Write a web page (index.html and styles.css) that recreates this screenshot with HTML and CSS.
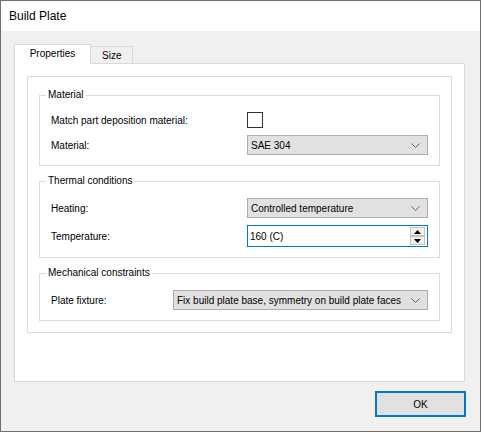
FILE: index.html
```html
<!DOCTYPE html>
<html lang="en">

<head>
  <meta charset="UTF-8">
  <title>Build Plate</title>
  <link rel="stylesheet" href="styles.css">
</head>

<body>
  <div class="window">
    <div class="titlebar">Build Plate</div>
    <div class="client">
      <div class="tabs">
        <div class="tab active">Properties</div>
        <div class="tab">Size</div>
      </div>
      <div class="tabpage">
        <div class="page-inner">
          <fieldset class="group">
            <legend>Material</legend>
            <div class="row">
              <span class="label">Match part deposition material:</span>
              <span class="control"><span class="checkbox"></span></span>
            </div>
            <div class="row">
              <span class="label">Material:</span>
              <div class="combo">
                <span>SAE 304</span>
                <svg class="chevron" width="9" height="5" viewBox="0 0 9 5"><polyline points="0.5,0.5 4.5,4.5 8.5,0.5" /></svg>
              </div>
            </div>
          </fieldset>

          <fieldset class="group">
            <legend>Thermal conditions</legend>
            <div class="row">
              <span class="label">Heating:</span>
              <div class="combo">
                <span>Controlled temperature</span>
                <svg class="chevron" width="9" height="5" viewBox="0 0 9 5"><polyline points="0.5,0.5 4.5,4.5 8.5,0.5" /></svg>
              </div>
            </div>
            <div class="row">
              <span class="label">Temperature:</span>
              <div class="spin">
                <span>160 (C)</span>
                <div class="spin-buttons">
                  <div class="spin-btn"><svg width="7" height="4" viewBox="0 0 7 4"><polygon points="3.5,0 7,4 0,4" /></svg></div>
                  <div class="spin-btn"><svg width="7" height="4" viewBox="0 0 7 4"><polygon points="0,0 7,0 3.5,4" /></svg></div>
                </div>
              </div>
            </div>
          </fieldset>

          <fieldset class="group">
            <legend>Mechanical constraints</legend>
            <div class="row wide">
              <span class="label">Plate fixture:</span>
              <div class="combo">
                <span>Fix build plate base, symmetry on build plate faces</span>
                <svg class="chevron" width="9" height="5" viewBox="0 0 9 5"><polyline points="0.5,0.5 4.5,4.5 8.5,0.5" /></svg>
              </div>
            </div>
          </fieldset>
        </div>
      </div>
      <div class="buttons">
        <button class="ok">OK</button>
      </div>
    </div>
  </div>
</body>

</html>
```

FILE: styles.css
```css
* {
  margin: 0;
  padding: 0;
  box-sizing: border-box;
}

body {
  background: #f0f0f0;
  font-family: 'Liberation Sans', Arial, sans-serif;
  font-size: 10px;
  color: #000;
}

.window {
  width: 481px;
  height: 432px;
  border: 1px solid #6f6f6f;
  background: #f0f0f0;
}

.titlebar {
  height: 30px;
  line-height: 30px;
  padding-left: 8px;
  background: #fff;
  font-size: 12px;
}

.client {
  padding: 13px 15px 0 13px;
}

.tabs {
  display: flex;
  align-items: flex-end;
  height: 19px;
}

.tab {
  height: 17px;
  line-height: 17px;
  padding: 0 11px;
  border: 1px solid #d9d9d9;
  border-bottom: none;
  border-left: none;
  background: #f0f0f0;
}

.tab.active {
  position: relative;
  z-index: 1;
  height: 20px;
  margin-bottom: -1px;
  width: 77px;
  padding: 0;
  text-align: center;
  line-height: 18px;
  border-left: 1px solid #d9d9d9;
  background: #fff;
}

.tabpage {
  height: 319px;
  padding: 12px;
  background: #fff;
  border: 1px solid #d9d9d9;
}

.page-inner {
  height: 257px;
  padding: 10px 11px 11px;
  border: 1px solid #dcdcdc;
}

.group {
  margin-bottom: 7px;
  padding: 9px 11px 10px;
  border: 1px solid #dcdcdc;
  min-width: 0;
}

.group:last-child {
  margin-bottom: 0;
}

.group legend {
  margin-left: -5px;
  padding: 0 2px;
  line-height: 16px;
}

.row {
  display: grid;
  grid-template-columns: 1fr 181px;
  align-items: center;
}

.row + .row {
  margin-top: 7px;
}

.row.wide {
  grid-template-columns: 1fr 255px;
}

.checkbox {
  display: block;
  width: 16px;
  height: 16px;
  border: 1px solid #333;
  background: #fff;
}

.combo {
  display: flex;
  align-items: center;
  justify-content: space-between;
  height: 20px;
  padding: 0 7px 0 3px;
  background: #e1e1e1;
  border: 1px solid #adadad;
  white-space: nowrap;
}

.chevron polyline {
  fill: none;
  stroke: #606060;
  stroke-width: 1;
}

.spin {
  display: flex;
  align-items: center;
  justify-content: space-between;
  height: 22px;
  padding: 0 2px;
  background: #fff;
  border: 1px solid #0078d7;
}

.spin-buttons {
  display: flex;
  flex-direction: column;
}

.spin-btn {
  display: flex;
  align-items: center;
  justify-content: center;
  width: 15px;
  height: 9px;
  background: #f0f0f0;
  border: 1px solid #c4c4c4;
}

.spin-btn polygon {
  fill: #000;
}

.buttons {
  display: flex;
  justify-content: flex-end;
  margin-top: 9px;
  margin-right: -1px;
}

.ok {
  width: 91px;
  height: 26px;
  background: #e1e1e1;
  border: 2px solid #0078d7;
  font-family: 'Liberation Sans', Arial, sans-serif;
  font-size: 10px;
  color: #000;
}
```
